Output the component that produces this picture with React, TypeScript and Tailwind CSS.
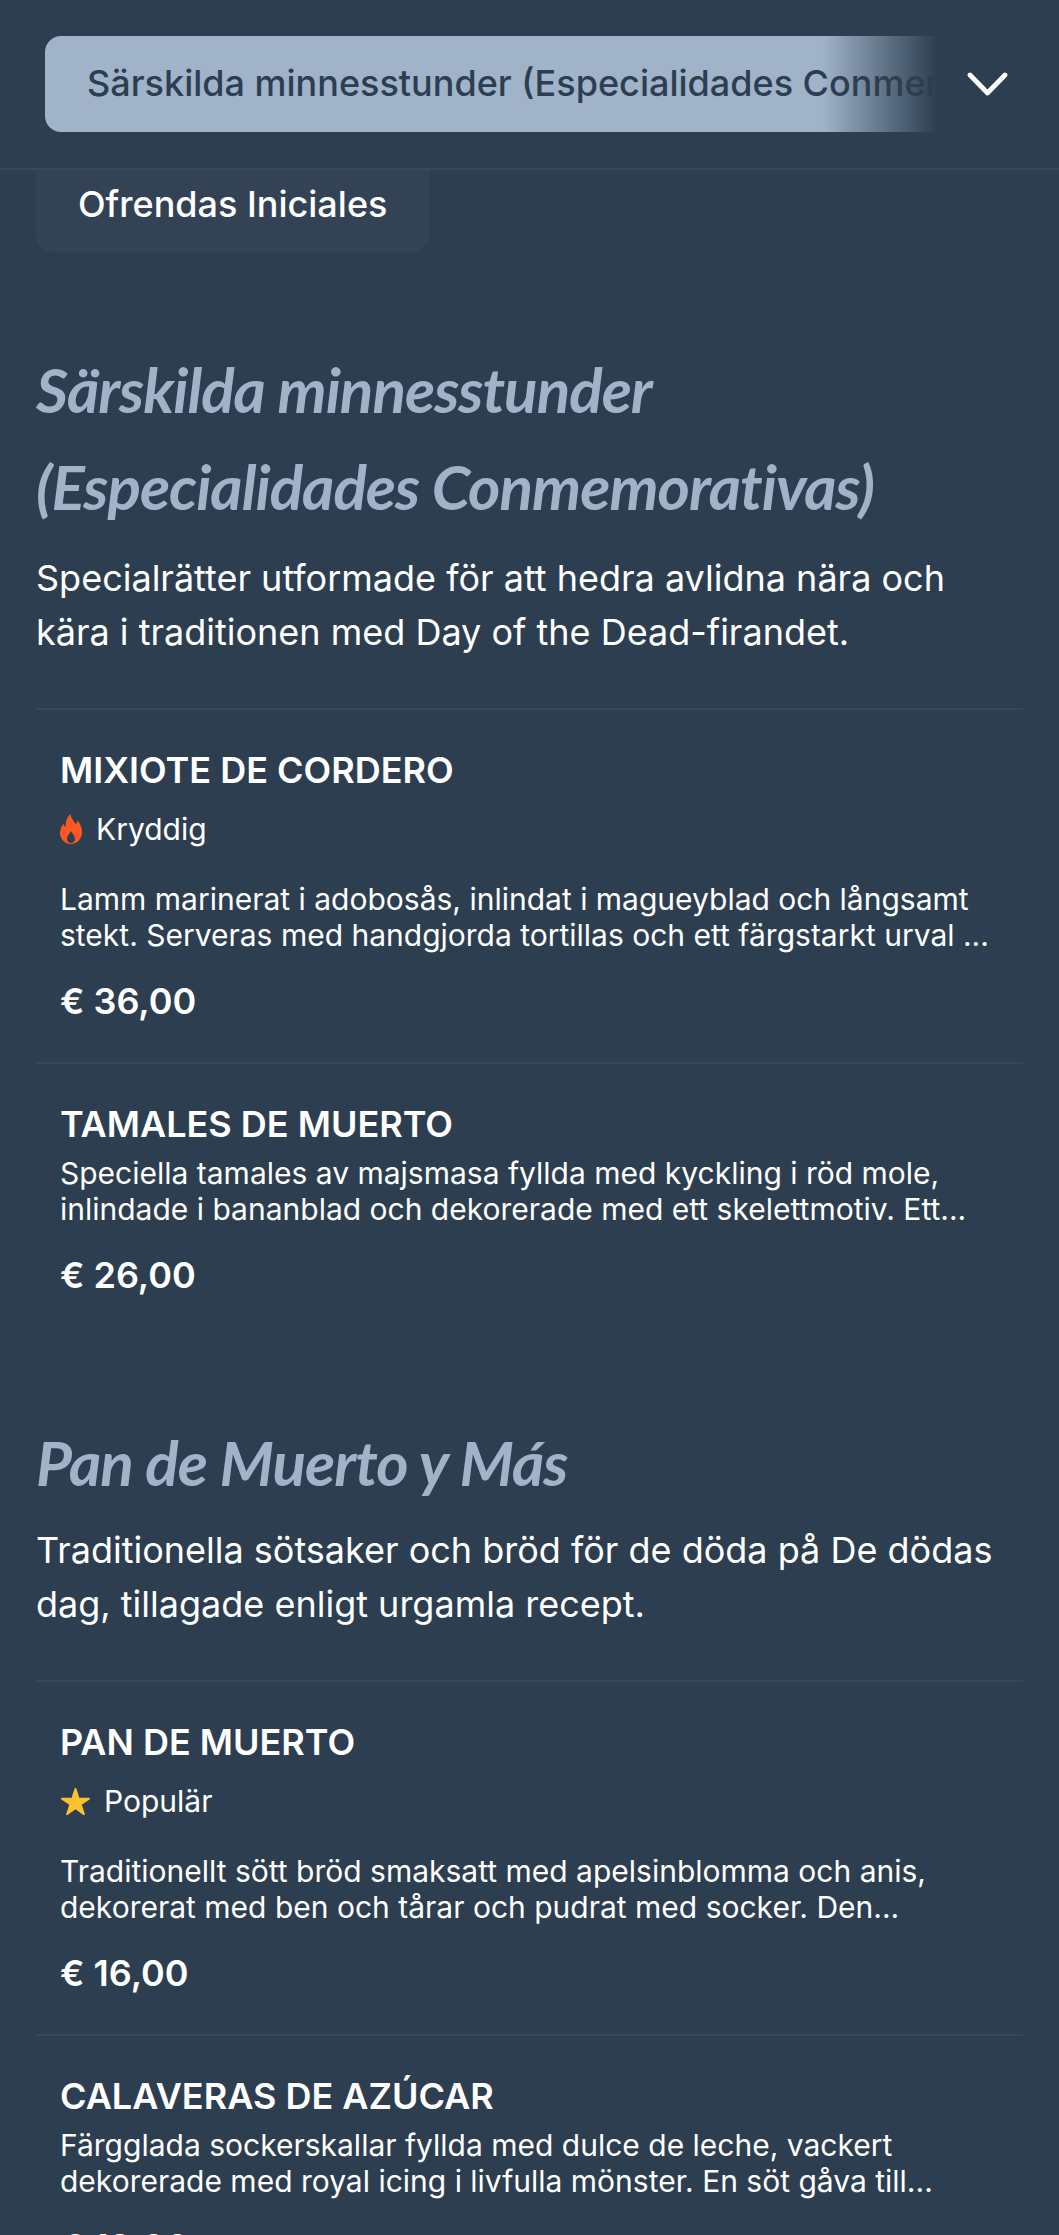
import React from 'react';
import { IoStar } from 'react-icons/io5';

type Dish = {
    name: string;
    tag?: 'spicy' | 'popular';
    lines: string[];
    price: string;
};

type Section = {
    title: string[];
    intro: string[];
    gapTop: string;
    gapIntro: string;
    dishes: Dish[];
};

const sections: Section[] = [
    {
        title: ['Särskilda minnesstunder', '(Especialidades Conmemorativas)'],
        intro: ['Specialrätter utformade för att hedra avlidna nära och', 'kära i traditionen med Day of the Dead-firandet.'],
        gapTop: 'mt-[89px]',
        gapIntro: 'mt-[16px]',
        dishes: [
            {
                name: 'MIXIOTE DE CORDERO',
                tag: 'spicy',
                lines: ['Lamm marinerat i adobosås, inlindat i magueyblad och långsamt', 'stekt. Serveras med handgjorda tortillas och ett färgstarkt urval ...'],
                price: '€ 36,00',
            },
            {
                name: 'TAMALES DE MUERTO',
                lines: ['Speciella tamales av majsmasa fyllda med kyckling i röd mole,', 'inlindade i bananblad och dekorerade med ett skelettmotiv. Ett...'],
                price: '€ 26,00',
            },
        ],
    },
    {
        title: ['Pan de Muerto y Más'],
        intro: ['Traditionella sötsaker och bröd för de döda på De dödas', 'dag, tillagade enligt urgamla recept.'],
        gapTop: 'mt-[78px]',
        gapIntro: 'mt-[12px]',
        dishes: [
            {
                name: 'PAN DE MUERTO',
                tag: 'popular',
                lines: ['Traditionellt sött bröd smaksatt med apelsinblomma och anis,', 'dekorerat med ben och tårar och pudrat med socker. Den...'],
                price: '€ 16,00',
            },
            {
                name: 'CALAVERAS DE AZÚCAR',
                lines: ['Färgglada sockerskallar fyllda med dulce de leche, vackert', 'dekorerade med royal icing i livfulla mönster. En söt gåva till...'],
                price: '€ 12,00',
            },
        ],
    },
];

const Flame = () => (
    <svg className="w-[22px] h-[30px] shrink-0" viewBox="0 0 22 30">
        <path
            fill="#ff5722"
            fillRule="evenodd"
            d="M10.5 0 C11 5 14 7 15.5 10 C16.5 9.5 17.5 8 17.5 6.5 C20 9.5 22 13 22 18 C22 25 17 30 11 30 C5 30 0 25 0 19 C0 15 1.5 12.5 3.5 9.5 C3.8 11.5 4.5 12.5 5.5 13 C5.5 8 7 3 10.5 0 Z M11 17 C9.5 20 7 21.5 7 25 C7 27.5 9 29 11 29 C13 29 15 27.5 15 25 C15 21.5 12.5 20 11 17 Z"
        />
    </svg>
);

const DishRow: React.FC<{ dish: Dish }> = ({ dish }) => (
    <div className="border-t-2 border-[#36485c] px-6 pt-[36px] pb-[37px]">
        <h4 className="text-[36px] leading-[48px] font-semibold">{dish.name}</h4>
        {dish.tag === 'spicy' && (
            <div className="flex items-center gap-[14px] h-[48px] mt-[11px] mb-[28px] text-[30px]">
                <Flame />
                <span>Kryddig</span>
            </div>
        )}
        {dish.tag === 'popular' && (
            <div className="flex items-center gap-[13px] h-[48px] mt-[11px] mb-[28px] text-[30px]">
                <IoStar className="w-[31px] h-[31px] text-[#fbc02d]" />
                <span>Populär</span>
            </div>
        )}
        <p className={`text-[30px] leading-[36px] whitespace-nowrap ${dish.tag ? '' : 'mt-[7px]'}`}>
            {dish.lines[0]}
            <br />
            {dish.lines[1]}
        </p>
        <p className="text-[36px] leading-[48px] font-semibold mt-[24px]">{dish.price}</p>
    </div>
);

export default function App() {
    return (
        <div className="h-[2235px] overflow-hidden bg-[#2c3e50] text-white font-['Inter',sans-serif]">
            {/* Category bar */}
            <header className="flex h-[170px] border-b-2 border-[#36485c] pl-[45px] pt-[36px]">
                <div className="relative w-[892px] h-[96px] overflow-hidden">
                    <div className="flex items-center h-full pl-[42px] pb-[2px] rounded-l-[16px] bg-[#a0b3c9] text-[#2c3e50] text-[36px] font-medium whitespace-nowrap">
                        Särskilda minnesstunder (Especialidades Conmemorativas)
                    </div>
                    <div className="absolute inset-y-0 right-0 w-[115px] bg-gradient-to-r from-transparent to-[#2c3e50]" />
                </div>
                <svg className="ml-[30px] mt-[36px] w-[41px] h-[24px]" viewBox="0 0 41 24" fill="none" stroke="white" strokeWidth="4.8" strokeLinecap="round" strokeLinejoin="round">
                    <path d="M3 3 L20.5 21 L38 3" />
                </svg>
            </header>

            <main className="px-[36px]">
                <div className="flex items-center w-[393px] h-[82px] pl-[42px] pb-[14px] rounded-b-[16px] bg-[#334355] text-[36px] font-medium">
                    Ofrendas Iniciales
                </div>

                {sections.map((section) => (
                    <section key={section.title[0]} className={section.gapTop}>
                        <h2 className="text-[#a0b3c9] text-[62px] leading-[97px] tracking-[-1px] font-['Lato',sans-serif] font-bold italic whitespace-nowrap">
                            {section.title.map((line) => (
                                <div key={line}>{line}</div>
                            ))}
                        </h2>
                        <p className={`text-[36px] leading-[54px] mb-[49px] whitespace-nowrap ${section.gapIntro}`}>
                            {section.intro[0]}
                            <br />
                            {section.intro[1]}
                        </p>
                        {section.dishes.map((dish) => (
                            <DishRow key={dish.name} dish={dish} />
                        ))}
                    </section>
                ))}
            </main>
        </div>
    );
}
